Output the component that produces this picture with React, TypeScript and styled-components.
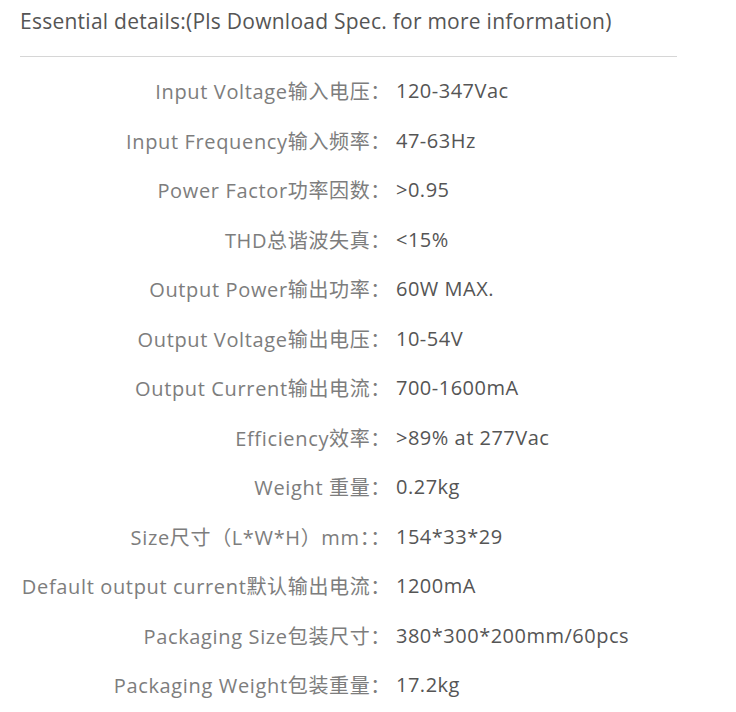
import React from "react";
import styled, { createGlobalStyle } from "styled-components";

const Global = createGlobalStyle`
  html, body { margin: 0; padding: 0; background: #fff; }
  body { font-family: "Open Sans", "Noto Sans CJK SC", sans-serif; }
`;

const Page = styled.div`
  width: 736px;
  height: 712px;
  padding: 0 0 0 20px;
  box-sizing: border-box;
  overflow: hidden;
`;

const Title = styled.h3`
  margin: 0;
  height: 42px;
  line-height: 42px;
  font-size: 21px;
  letter-spacing: 0.25px;
  font-weight: 400;
  color: #555;
  white-space: nowrap;
`;

const Divider = styled.hr`
  margin: 14px 0 0 0;
  width: 657px;
  border: 0;
  border-top: 1px solid #d6d6d6;
`;

const List = styled.div`
  display: flex;
  flex-direction: column;
  padding-top: 9px;
`;

const Row = styled.div`
  display: grid;
  grid-template-columns: 371px 1fr;
  column-gap: 5px;
  height: 49.5px;
  align-items: center;
  font-size: 20px;
  letter-spacing: 0.5px;
  white-space: nowrap;
`;

const Label = styled.span`
  text-align: right;
  letter-spacing: 0.65px;
  color: #7d7d7d;
`;

const Value = styled.span`
  color: #555;
`;

const specs: [string, string][] = [
  ["Input Voltage输入电压：", "120-347Vac"],
  ["Input Frequency输入频率：", "47-63Hz"],
  ["Power Factor功率因数：", ">0.95"],
  ["THD总谐波失真：", "<15%"],
  ["Output Power输出功率：", "60W MAX."],
  ["Output Voltage输出电压：", "10-54V"],
  ["Output Current输出电流：", "700-1600mA"],
  ["Efficiency效率：", ">89% at 277Vac"],
  ["Weight 重量：", "0.27kg"],
  ["Size尺寸（L*W*H）mm：：", "154*33*29"],
  ["Default output current默认输出电流：", "1200mA"],
  ["Packaging Size包装尺寸：", "380*300*200mm/60pcs"],
  ["Packaging Weight包装重量：", "17.2kg"],
];

export default function App() {
  return (
    <Page>
      <Global />
      <Title>Essential details:(Pls Download Spec. for more information)</Title>
      <Divider />
      <List>
        {specs.map(([k, v]) => (
          <Row key={k}>
            <Label>{k}</Label>
            <Value>{v}</Value>
          </Row>
        ))}
      </List>
    </Page>
  );
}
